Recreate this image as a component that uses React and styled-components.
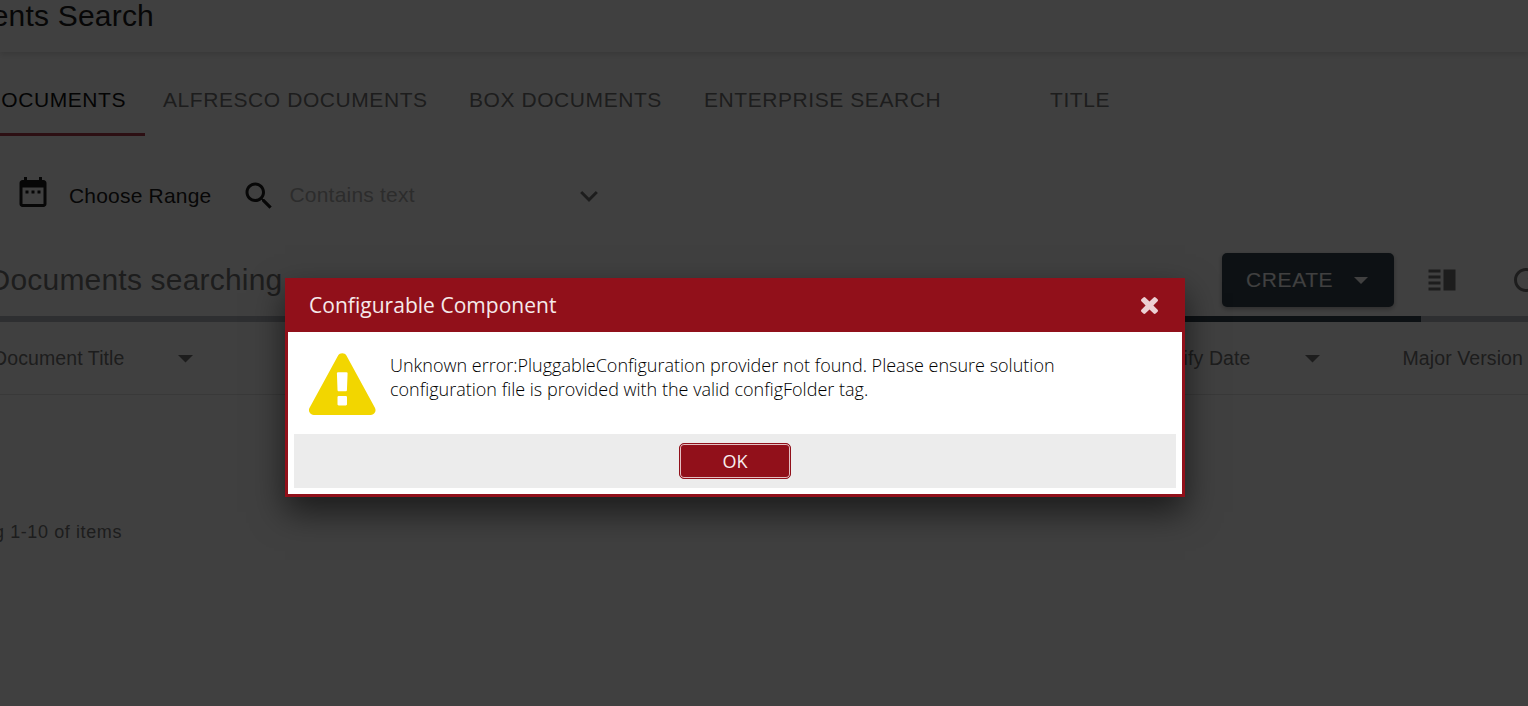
import React from "react";
import styled, { createGlobalStyle } from "styled-components";

const GlobalStyle = createGlobalStyle`
  * { box-sizing: border-box; }
  body { margin: 0; background: #fff; overflow: hidden; }
  svg { display: block; flex: none; fill: currentColor; }
`;

const Page = styled.div`
  display: flex;
  flex-direction: column;
  width: 1528px;
  height: 706px;
  overflow: hidden;
  background: #fff;
  color: #757575;
  font-family: "Liberation Sans", Arial, sans-serif;
  white-space: nowrap;
`;

const AppBar = styled.header`
  height: 52px;
  flex: none;
  box-shadow: 0 3px 6px rgba(0, 0, 0, 0.12);
`;

const Title = styled.h1`
  display: flex;
  justify-content: flex-end;
  width: 154px;
  margin: 0;
  overflow: hidden;
  color: #1c1c1c;
  font-size: 30px;
  font-weight: 400;
  letter-spacing: 0.2px;
  line-height: 32px;
`;

const Tabs = styled.nav`
  display: flex;
  height: 84px;
  flex: none;
`;

const Tab = styled.div`
  display: flex;
  justify-content: ${(p) => (p.$active ? "flex-end" : "flex-start")};
  width: ${(p) => p.$width}px;
  padding: 36px ${(p) => (p.$active ? 19 : 18)}px 0 18px;
  border-bottom: 3px solid ${(p) => (p.$active ? "#b03c4c" : "transparent")};
  color: ${(p) => (p.$active ? "#101010" : "#757575")};
  font-size: 21px;
  letter-spacing: 0.57px;
  line-height: 24px;
`;

const Filters = styled.div`
  display: flex;
  align-items: flex-start;
  height: 107px;
  flex: none;
  padding: 38px 0 0 14.5px;
  color: #1c1c1c;
  font-size: 21px;
  line-height: 24px;
`;

const RangeLabel = styled.span`
  width: 190px;
  padding: 10px 0 0 18.5px;
  letter-spacing: 0.2px;
`;

const SearchIconBox = styled.span`
  padding-top: 4px;
`;

const Placeholder = styled.span`
  width: 303px;
  padding: 9px 0 0 13px;
  color: #b0b0b0;
  letter-spacing: 0.2px;
`;

const ChevronBox = styled.span`
  padding-top: 17px;
  color: #757575;
`;

const Toolbar = styled.div`
  display: flex;
  justify-content: space-between;
  height: 73px;
  flex: none;
  padding-top: 10px;
`;

const Heading = styled.h2`
  display: flex;
  justify-content: flex-end;
  width: 282.5px;
  margin: 0;
  padding-top: 10px;
  overflow: hidden;
  font-size: 30px;
  font-weight: 400;
  letter-spacing: 0.2px;
  line-height: 34px;
`;

const Actions = styled.div`
  display: flex;
  align-items: center;
  width: 306px;
  height: 54px;
`;

const CreateButton = styled.button`
  display: flex;
  align-items: center;
  justify-content: space-between;
  width: 172px;
  height: 54px;
  flex: none;
  margin-right: 29.5px;
  padding: 0 26px 0 24px;
  border: 0;
  border-radius: 5px;
  background: #364650;
  box-shadow: 0 2px 5px rgba(0, 0, 0, 0.3);
  color: #fff;
  font: 21px/24px "Liberation Sans", Arial, sans-serif;
  letter-spacing: 0.6px;
`;

const ActionIcon = styled.span`
  flex: none;
  margin-right: 48px;
`;

const Progress = styled.div`
  display: flex;
  height: 6px;
  flex: none;
  background: #b8bdc2;
`;

const ProgressValue = styled.div`
  width: 500px;
  margin-left: 921px;
  background: #364650;
`;

const TableHead = styled.div`
  display: flex;
  height: 73px;
  flex: none;
  align-items: center;
  border-bottom: 1px solid #e4e4e4;
  font-size: 19.5px;
  letter-spacing: 0.1px;
`;

const Column = styled.div`
  display: flex;
  align-items: center;
  justify-content: flex-end;
  gap: ${(p) => p.$gap || 0}px;
  width: ${(p) => p.$width}px;
`;

const Pager = styled.div`
  display: flex;
  justify-content: flex-end;
  width: 122px;
  margin-top: 126px;
  overflow: hidden;
  font-size: 18px;
  letter-spacing: 0.6px;
  line-height: 22px;
`;

const Overlay = styled.div`
  position: absolute;
  top: 0;
  left: 0;
  display: flex;
  align-items: flex-start;
  width: 1528px;
  height: 706px;
  padding: 278px 0 0 285px;
  overflow: hidden;
  background: rgba(0, 0, 0, 0.75);
`;

const Dialog = styled.section`
  display: flex;
  flex-direction: column;
  width: 900px;
  height: 219px;
  border: 3px solid #91101a;
  background: #fff;
  box-shadow: 0 15px 32px rgba(0, 0, 0, 0.58);
  font-family: "Open Sans", sans-serif;
`;

const DialogHeader = styled.div`
  display: flex;
  align-items: center;
  justify-content: space-between;
  height: 51px;
  flex: none;
  padding: 0 24.5px 3px 21px;
  background: #91101a;
  color: #f5e9ea;
  font-size: 21px;
  letter-spacing: 0.03px;
  line-height: 30px;
`;

const CloseButton = styled.span`
  color: #ecd0d3;
`;

const DialogBody = styled.div`
  display: flex;
  height: 102px;
  flex: none;
  padding: 21px 21px 0;
  color: #000;
`;

const WarningBox = styled.span`
  width: 67px;
  flex: none;
  margin-right: 14px;
  color: #f2d600;
`;

const Message = styled.p`
  width: 720px;
  margin: 0;
  font-size: 18px;
  font-weight: 300;
  line-height: 24px;
`;

const DialogFooter = styled.div`
  display: flex;
  align-items: center;
  justify-content: center;
  height: 54px;
  flex: none;
  margin: 0 6px;
  background: #ececec;
`;

const OkButton = styled.button`
  width: 112px;
  height: 36px;
  padding: 0;
  border: 1px solid #91101a;
  border-radius: 5px;
  background: #91101a;
  box-shadow: inset 0 0 0 1px #e3bfc2;
  color: #f8eeee;
  font: 18px/32px "Open Sans", sans-serif;
`;

const CaretSvg = styled.svg`
  margin-top: ${(p) => p.$drop || 0}px;
`;

const Caret = ({ width = 15, drop }) => (
  <CaretSvg $drop={drop} width={width} height={width / 2} viewBox="7 10 10 5">
    <path d="M7 10l5 5 5-5z" />
  </CaretSvg>
);

const Icon = ({ size, d }) => (
  <svg width={size} height={size} viewBox="0 0 24 24">
    <path d={d} />
  </svg>
);

const CALENDAR =
  "M9 11H7v2h2v-2zm4 0h-2v2h2v-2zm4 0h-2v2h2v-2zm2-7h-1V2h-2v2H8V2H6v2H5c-1.11 0-1.99.9-1.99 2L3 20c0 1.1.89 2 2 2h14c1.1 0 2-.9 2-2V6c0-1.1-.9-2-2-2zm0 16H5V9h14v11z";
const SEARCH =
  "M15.5 14h-.79l-.28-.27C15.41 12.59 16 11.11 16 9.5 16 5.91 13.09 3 9.5 3S3 5.91 3 9.5 5.91 16 9.5 16c1.61 0 3.09-.59 4.23-1.57l.27.28v.79l5 4.99L20.49 19l-4.99-5zm-6 0C7.01 14 5 11.99 5 9.5S7.01 5 9.5 5 14 7.01 14 9.5 11.99 14 9.5 14z";
const SPLIT =
  "M3 15h8v-2H3v2zm0 4h8v-2H3v2zm0-8h8V9H3v2zm0-6v2h8V5H3zm10 0h8v14h-8V5z";
const REFRESH =
  "M17.65 6.35C16.2 4.9 14.21 4 12 4c-4.42 0-7.99 3.58-7.99 8s3.57 8 7.99 8c3.73 0 6.84-2.55 7.73-6h-2.08c-.82 2.33-3.04 4-5.65 4-3.31 0-6-2.69-6-6s2.69-6 6-6c1.66 0 3.14.69 4.22 1.78L13 11h7V4l-2.35 2.35z";
const CLOSE =
  "M1298 1322q0 40-28 68l-136 136q-28 28-68 28t-68-28l-294-294-294 294q-28 28-68 28t-68-28l-136-136q-28-28-28-68t28-68l294-294-294-294q-28-28-28-68t28-68l136-136q28-28 68-28t68 28l294 294 294-294q28-28 68-28t68 28l136 136q28 28 28 68t-28 68l-294 294 294 294q28 28 28 68z";
const WARNING =
  "M1024 1375v-190q0-14-9.5-23.5t-22.5-9.5h-192q-13 0-22.5 9.5t-9.5 23.5v190q0 14 9.5 23.5t22.5 9.5h192q13 0 22.5-9.5t9.5-23.5zm-2-374l18-459q0-12-10-19-13-11-24-11h-220q-11 0-24 11-10 7-10 21l17 457q0 10 10 16.5t24 6.5h185q14 0 23.5-6.5t10.5-16.5zm-14-934l768 1408q35 63-2 126-17 29-46.5 46t-63.5 17h-1536q-34 0-63.5-17t-46.5-46q-37-63-2-126l768-1408q17-31 47-49t65-18 65 18 47 49z";

export default function App() {
  return (
    <>
      <GlobalStyle />
      <Page>
        <AppBar>
          <Title>ents Search</Title>
        </AppBar>
        <Tabs>
          <Tab $active $width={145}>OCUMENTS</Tab>
          <Tab $width={306}>ALFRESCO DOCUMENTS</Tab>
          <Tab $width={235}>BOX DOCUMENTS</Tab>
          <Tab $width={346}>ENTERPRISE SEARCH</Tab>
          <Tab $width={96}>TITLE</Tab>
        </Tabs>
        <Filters>
          <Icon size={36} d={CALENDAR} />
          <RangeLabel>Choose Range</RangeLabel>
          <SearchIconBox>
            <Icon size={36} d={SEARCH} />
          </SearchIconBox>
          <Placeholder>Contains text</Placeholder>
          <ChevronBox>
            <svg width="18" height="11" viewBox="6 8.59 12 7.41">
              <path d="M7.41 8.59L12 13.17l4.59-4.58L18 10l-6 6-6-6z" />
            </svg>
          </ChevronBox>
        </Filters>
        <Toolbar>
          <Heading>Documents searching</Heading>
          <Actions>
            <CreateButton>
              CREATE
              <Caret width={14} />
            </CreateButton>
            <ActionIcon>
              <Icon size={36} d={SPLIT} />
            </ActionIcon>
            <Icon size={36} d={REFRESH} />
          </Actions>
        </Toolbar>
        <Progress>
          <ProgressValue />
        </Progress>
        <TableHead>
          <Column $width={192.5} $gap={53}>
            Document Title
            <Caret drop={2} />
          </Column>
          <Column $width={1127} $gap={54}>
            Modify Date
            <Caret drop={2} />
          </Column>
          <Column $width={203.5}>Major Version</Column>
        </TableHead>
        <Pager>g 1-10 of items</Pager>
      </Page>
      <Overlay>
        <Dialog>
          <DialogHeader>
            Configurable Component
            <CloseButton>
              <svg width="17" height="17" viewBox="110 366 1188 1188">
                <path d={CLOSE} />
              </svg>
            </CloseButton>
          </DialogHeader>
          <DialogBody>
            <WarningBox>
              <svg width="66.5" height="62" viewBox="0 0 1792 1664">
                <path d={WARNING} />
              </svg>
            </WarningBox>
            <Message>
              Unknown error:PluggableConfiguration provider not found. Please ensure solution
              configuration file is provided with the valid configFolder tag.
            </Message>
          </DialogBody>
          <DialogFooter>
            <OkButton>OK</OkButton>
          </DialogFooter>
        </Dialog>
      </Overlay>
    </>
  );
}
